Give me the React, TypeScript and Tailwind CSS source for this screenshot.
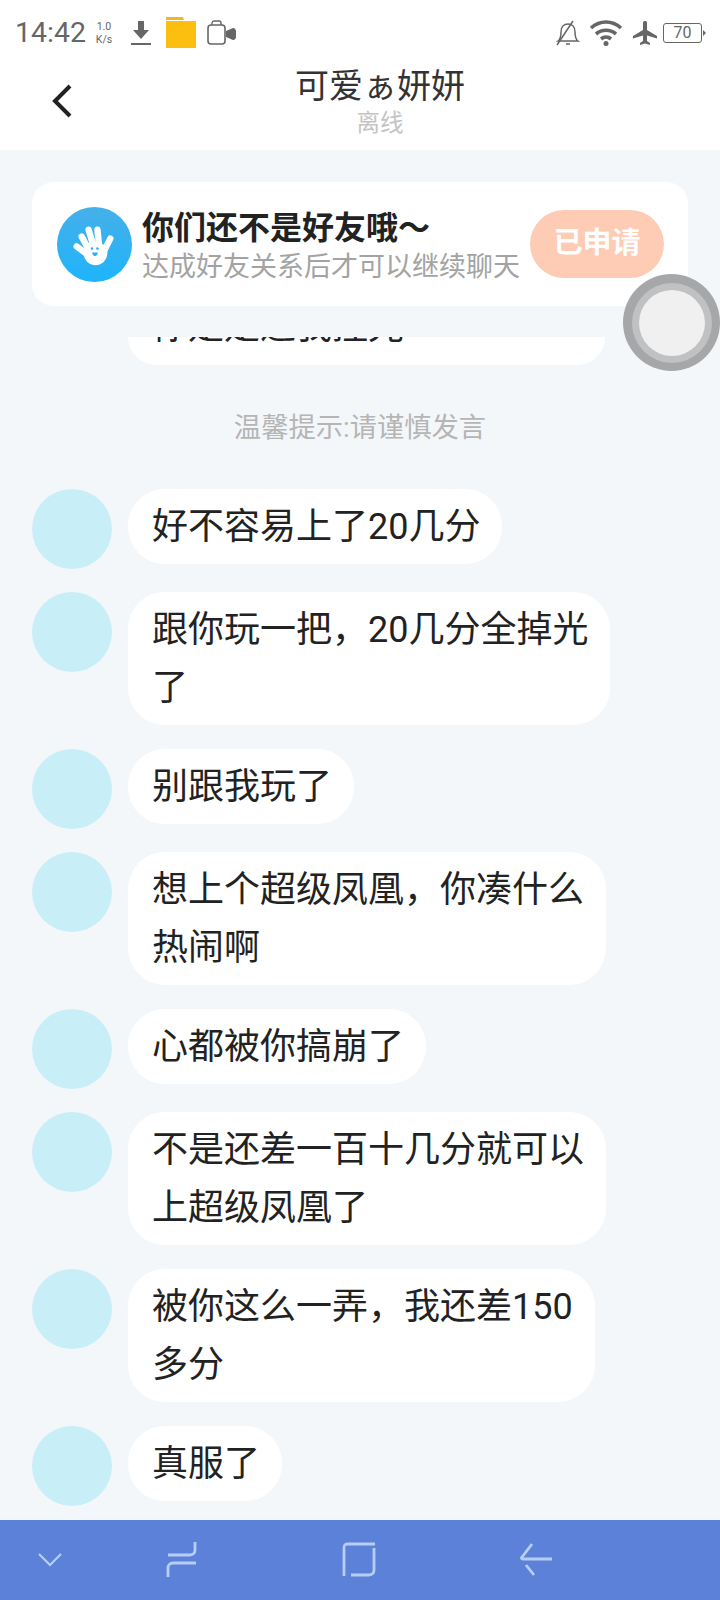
const sans = "font-['Roboto','Noto_Sans_CJK_SC',sans-serif]";

function Hand() {
  return (
    <svg viewBox="0 0 76 76" className="w-[75px] h-[75px] shrink-0">
      <defs>
        <linearGradient id="g" x1="0" y1="0" x2="0" y2="1">
          <stop offset="0" stopColor="#45b0e8" />
          <stop offset="1" stopColor="#1fb4fb" />
        </linearGradient>
      </defs>
      <circle cx="38" cy="38" r="38" fill="url(#g)" />
      <g stroke="#fff" strokeWidth="6.500" strokeLinecap="round" fill="none">
        <path d="M20 40l12 9" />
        <path d="M25 30l8 15" />
        <path d="M32 23l6 20" />
        <path d="M41 23l2 20" />
        <path d="M54 32l-7 14" />
      </g>
      <circle cx="39" cy="47" r="12" fill="#fff" />
      <circle cx="35.500" cy="42" r="1.300" fill="#2bb0ee" />
      <circle cx="41" cy="42" r="1.300" fill="#2bb0ee" />
      <path d="M35.500 46c1 5 5 5 6 0z" fill="#2bb0ee" />
    </svg>
  );
}

function StatusBar() {
  return (
    <div className="h-[66px] pl-[15px] pr-[14px] flex items-center justify-between text-[#666666]">
      <div className="flex items-center">
        <span className="text-[28.500px] leading-none w-[70px]">14:42</span>
        <div className="ml-[9px] w-[20px] flex flex-col items-center text-[10.500px] leading-[13px]">
          <span>1.0</span>
          <span>K/s</span>
        </div>
        <svg viewBox="0 0 20 28" className="ml-[17px] w-[20px] h-[28px]" fill="#666666">
          <path d="M7 2h6v9h5l-8 9-8-9h5z" />
          <rect y="24" width="20" height="2" />
        </svg>
        <svg viewBox="0 0 30 32" className="ml-[15px] w-[30px] h-[32px]">
          <path d="M0 0h17l1 3H0z" fill="#f0b828" />
          <rect y="4" width="30" height="27" fill="#fdbf0f" />
        </svg>
        <svg viewBox="0 0 29 26" className="ml-[11px] w-[29px] h-[26px]">
          <rect x="1" y="5" width="17" height="19" rx="3" fill="none" stroke="#666666" strokeWidth="1.600" />
          <path d="M5 5V3c0-1 1-2 2-2h5c1 0 2 1 2 2v2" fill="none" stroke="#666666" strokeWidth="1.400" />
          <path d="M19 11l7-3c1-.5 3 1 3 3v6c0 2-2 3.500-3 3l-7-3z" fill="#666666" />
        </svg>
      </div>
      <div className="flex items-center">
        <svg viewBox="0 0 24 26" className="w-[24px] h-[26px]" fill="none" stroke="#666666" strokeWidth="1.500">
          <path d="M2 21c3-2 3-6 3-9 0-5 3-8 7-8s7 3 7 8c0 3 0 7 3 9z" />
          <path d="M10 24h4" />
          <path d="M1 25L17 1" />
        </svg>
        <svg viewBox="0 0 34 26" className="ml-[9px] w-[34px] h-[26px]" fill="none" stroke="#666666" strokeWidth="3.600">
          <path d="M2 8c9-8 21-8 30 0" />
          <path d="M7 14c6-5 14-5 20 0" />
          <path d="M12 19c3-2.500 7-2.500 10 0" />
          <circle cx="17" cy="23.500" r="2.500" fill="#666666" stroke="none" />
        </svg>
        <svg viewBox="0 0 24 24" className="ml-[10px] w-[24px] h-[24px]" fill="#666666">
          <path d="M13.500 0.500c-.8-.8-2.200-.8-3 0-.5.500-.5 1.500-.5 2.500v6L0 15v2.500l10-3v5.500l-3 2v2l5-1.500 5 1.500v-2l-3-2v-5.500l10 3V15l-10-6V3c0-1 0-2-.5-2.500z" />
        </svg>
        <div className="ml-[6px] w-[39px] h-[20px] rounded-[3px] border-[1.500px] border-[#666666] flex items-center justify-center text-[16px] leading-none">
          70
        </div>
        <div className="ml-[1px] w-0 h-0 border-y-[3.500px] border-y-transparent border-l-[3px] border-l-[#666666]" />
      </div>
    </div>
  );
}

function Header() {
  return (
    <div className="relative h-[84px] flex flex-col items-center">
      <svg viewBox="0 0 22 34" className="absolute left-[51px] top-[18px] w-[22px] h-[34px]" fill="none" stroke="#222222" strokeWidth="4">
        <path d="M19 2L4 17l15 15" />
      </svg>
      <div className="ml-[40px] text-[34px] leading-[40px] text-[#333333]">可爱ぁ妍妍</div>
      <div className="ml-[40px] text-[23.500px] leading-[30px] mt-[2px] text-[#c4c4c4]">离线</div>
    </div>
  );
}

function Message({ lines }: { lines: string[] }) {
  return (
    <div className="flex items-start">
      <div className="w-[80px] h-[80px] rounded-full bg-[#c8eef8] shrink-0" />
      <div className="ml-[16px] mb-[1px] bg-white rounded-[37px] pl-[24px] pr-[22px] py-[8.500px] text-[36px] leading-[58px] text-[#222222]">
        {lines.map((l) => (
          <div key={l} className="whitespace-nowrap">{l}</div>
        ))}
      </div>
    </div>
  );
}

const msgs: string[][] = [
  ["好不容易上了20几分"],
  ["跟你玩一把，20几分全掉光", "了"],
  ["别跟我玩了"],
  ["想上个超级凤凰，你凑什么", "热闹啊"],
  ["心都被你搞崩了"],
  ["不是还差一百十几分就可以", "上超级凤凰了"],
  ["被你这么一弄，我还差150", "多分"],
  ["真服了"],
];

export default function App() {
  return (
    <div className={`w-[720px] h-[1600px] flex flex-col bg-[#f4f7fa] overflow-hidden relative ${sans}`}>
      <div className="bg-white h-[150px] shrink-0">
        <StatusBar />
        <Header />
      </div>

      <div className="mx-[32px] mt-[32px] h-[124px] shrink-0 bg-white rounded-[22px] pl-[25px] pr-[24px] flex items-center">
        <Hand />
        <div className="ml-[10px] flex-1 pt-[6px]">
          <div className="text-[32px] leading-[40px] font-semibold text-[#222222]">你们还不是好友哦～</div>
          <div className="text-[27px] leading-[38px] text-[#a3a3a3] whitespace-nowrap">达成好友关系后才可以继续聊天</div>
        </div>
        <div className="w-[134px] h-[68px] rounded-full bg-[#fecbb5] text-white text-[29px] font-semibold flex items-center justify-center">
          已申请
        </div>
      </div>

      <div className="flex-1 min-h-0 mt-[31px] overflow-hidden">
        <div className="ml-[128px] w-[477px] h-[28px] bg-white rounded-b-[28px] overflow-hidden relative">
          <div className="absolute left-[24px] -top-[30px] text-[36px] leading-[40px] text-[#222222] whitespace-nowrap">你是是逗我控光</div>
        </div>
        <div className="mt-[45px] text-center text-[27.300px] leading-[36px] text-[#b5b5b5]">温馨提示:请谨慎发言</div>
        <div className="mt-[43px] ml-[32px] flex flex-col gap-[23px]">
          {msgs.map((m) => (
            <Message key={m[0]} lines={m} />
          ))}
        </div>
      </div>

      <div className="h-[80px] shrink-0 bg-[#5b81d9] relative flex items-center">
        <svg viewBox="0 0 26 16" className="ml-[37px] w-[26px] h-[16px]" fill="none" stroke="#b9cdf4" strokeWidth="2.200">
          <path d="M2 2l11 11L24 2" />
        </svg>
        <svg viewBox="0 0 32 38" className="ml-[103px] w-[32px] h-[38px]" fill="none" stroke="#b9cdf4" strokeWidth="2.800">
          <path d="M29 1v8c0 3-2 5-5 5H2" />
          <path d="M30 22H7c-3 0-5 2-5 5v9" />
        </svg>
        <svg viewBox="0 0 34 36" className="ml-[144px] w-[34px] h-[36px]" fill="none" stroke="#b9cdf4" strokeWidth="2.800">
          <path d="M33 2H6C3 2 2 3 2 6v28" />
          <path d="M32 6v22c0 3-2 5-5 5H9" />
        </svg>
        <svg viewBox="0 0 32 34" className="ml-[144px] w-[32px] h-[34px]" fill="none" stroke="#b9cdf4" strokeWidth="2.800">
          <path d="M12 1L2 14c-1 1-.5 2 1 2h29" />
          <path d="M6 22l8 10" />
        </svg>
      </div>

      <div className="absolute left-[623px] top-[274px] w-[97px] h-[97px] rounded-full bg-[#a6a7a9] flex items-center justify-center">
        <div className="w-[80px] h-[80px] rounded-full bg-[#c0c1c3] flex items-center justify-center">
          <div className="w-[66px] h-[66px] rounded-full bg-[#f0f0f0]" />
        </div>
      </div>
    </div>
  );
}
